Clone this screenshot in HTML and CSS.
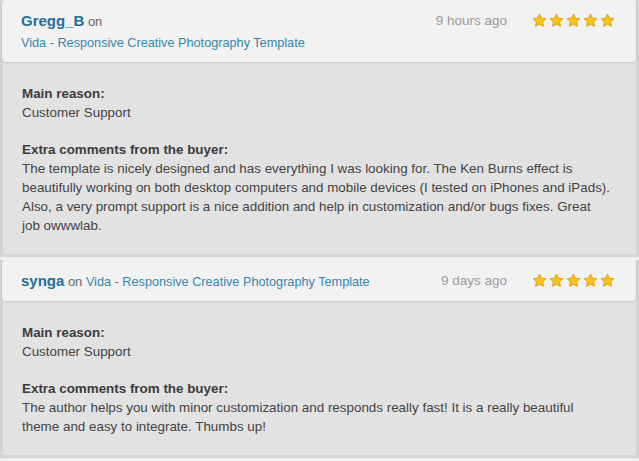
FILE: index.html
```html
<!DOCTYPE html>
<html lang="en">
<head>
    <meta charset="UTF-8">
    <meta name="viewport" content="width=device-width, initial-scale=1.0">
    <title>Buyer Reviews</title>
    <link rel="stylesheet" href="styles.css">
</head>
<body>

    <div class="reviews">
        <div class="review">
            <div class="review-head">
                <div class="review-who">
                    <a class="user" href="#">Gregg_B</a> <span class="on">on</span><br>
                    <a class="item" href="#">Vida - Responsive Creative Photography Template</a>
                </div>
                <div class="review-meta">
                    <span class="time">9 hours ago</span>
                    <span class="stars">
                        <svg viewBox="0 0 20 20"><path d="M10 1.5l2.6 5.4 5.9.8-4.3 4.1 1 5.9L10 14.9l-5.2 2.8 1-5.9-4.3-4.1 5.9-.8z"/></svg>
                        <svg viewBox="0 0 20 20"><path d="M10 1.5l2.6 5.4 5.9.8-4.3 4.1 1 5.9L10 14.9l-5.2 2.8 1-5.9-4.3-4.1 5.9-.8z"/></svg>
                        <svg viewBox="0 0 20 20"><path d="M10 1.5l2.6 5.4 5.9.8-4.3 4.1 1 5.9L10 14.9l-5.2 2.8 1-5.9-4.3-4.1 5.9-.8z"/></svg>
                        <svg viewBox="0 0 20 20"><path d="M10 1.5l2.6 5.4 5.9.8-4.3 4.1 1 5.9L10 14.9l-5.2 2.8 1-5.9-4.3-4.1 5.9-.8z"/></svg>
                        <svg viewBox="0 0 20 20"><path d="M10 1.5l2.6 5.4 5.9.8-4.3 4.1 1 5.9L10 14.9l-5.2 2.8 1-5.9-4.3-4.1 5.9-.8z"/></svg>
                    </span>
                </div>
            </div>
            <div class="review-body">
                <h4>Main reason:</h4>
                <p>Customer Support</p>
                <h4>Extra comments from the buyer:</h4>
                <p>The template is nicely designed and has everything I was looking for. The Ken Burns effect is beautifully working on both desktop computers and mobile devices (I tested on iPhones and iPads). Also, a very prompt support is a nice addition and help in customization and/or bugs fixes. Great job owwwlab.</p>
            </div>
        </div>

        <div class="review">
            <div class="review-head single">
                <div class="review-who">
                    <a class="user" href="#">synga</a> <span class="on">on</span>
                    <a class="item" href="#">Vida - Responsive Creative Photography Template</a>
                </div>
                <div class="review-meta">
                    <span class="time">9 days ago</span>
                    <span class="stars">
                        <svg viewBox="0 0 20 20"><path d="M10 1.5l2.6 5.4 5.9.8-4.3 4.1 1 5.9L10 14.9l-5.2 2.8 1-5.9-4.3-4.1 5.9-.8z"/></svg>
                        <svg viewBox="0 0 20 20"><path d="M10 1.5l2.6 5.4 5.9.8-4.3 4.1 1 5.9L10 14.9l-5.2 2.8 1-5.9-4.3-4.1 5.9-.8z"/></svg>
                        <svg viewBox="0 0 20 20"><path d="M10 1.5l2.6 5.4 5.9.8-4.3 4.1 1 5.9L10 14.9l-5.2 2.8 1-5.9-4.3-4.1 5.9-.8z"/></svg>
                        <svg viewBox="0 0 20 20"><path d="M10 1.5l2.6 5.4 5.9.8-4.3 4.1 1 5.9L10 14.9l-5.2 2.8 1-5.9-4.3-4.1 5.9-.8z"/></svg>
                        <svg viewBox="0 0 20 20"><path d="M10 1.5l2.6 5.4 5.9.8-4.3 4.1 1 5.9L10 14.9l-5.2 2.8 1-5.9-4.3-4.1 5.9-.8z"/></svg>
                    </span>
                </div>
            </div>
            <div class="review-body">
                <h4>Main reason:</h4>
                <p>Customer Support</p>
                <h4>Extra comments from the buyer:</h4>
                <p>The author helps you with minor customization and responds really fast! It is a really beautiful theme and easy to integrate. Thumbs up!</p>
            </div>
        </div>
    </div>

</body>
</html>
```

FILE: styles.css
```css
body {
    margin: 0;
    font-family: "Liberation Sans", Arial, sans-serif;
    background-color: #f0f0f0;
    color: #444;
}
.reviews {
    padding: 0 0 6px;
}
.review {
    background: #e2e2e2;
    border-left: 3px solid #d3d3d3;
    border-right: 3px solid #d3d3d3;
    border-bottom: 3px solid #d6d6d6;
    margin-bottom: 3px;
}
.review-head {
    display: flex;
    justify-content: space-between;
    align-items: flex-start;
    background: #f2f2f2;
    border-radius: 4px;
    margin: 0 0 0 -1px;
    padding: 10px 21px 8px 19px;
    box-shadow: 0 1px 2px rgba(0, 0, 0, 0.12);
}
.review-head.single {
    padding: 10px 21px 8px 19px;
}
.review-who {
    line-height: 21px;
    font-size: 12.7px;
}
.user {
    font-size: 15px;
    font-weight: bold;
    color: #1f6e98;
    text-decoration: none;
}
.on {
    color: #666;
    font-size: 13px;
}
.item {
    color: #3786ad;
    text-decoration: none;
}
.review-meta {
    display: flex;
    align-items: center;
    height: 21px;
}
.time {
    color: #9b9b9b;
    font-size: 13.5px;
    margin-right: 25px;
}
.stars {
    display: flex;
    gap: 2px;
}
.stars svg {
    width: 15px;
    height: 15px;
    fill: #f7c41a;
    stroke: #e09a00;
    stroke-width: 1.2;
    stroke-linejoin: round;
}
.review-body {
    width: 589px;
    padding: 22px 0 19px 19px;
    font-size: 13.4px;
    line-height: 19px;
}
.review-body h4 {
    margin: 0;
    font-size: 13.4px;
    color: #3c3c3c;
}
.review-body p {
    margin: 0 0 18px;
}
.review-body p:last-child {
    margin-bottom: 0;
}
```
